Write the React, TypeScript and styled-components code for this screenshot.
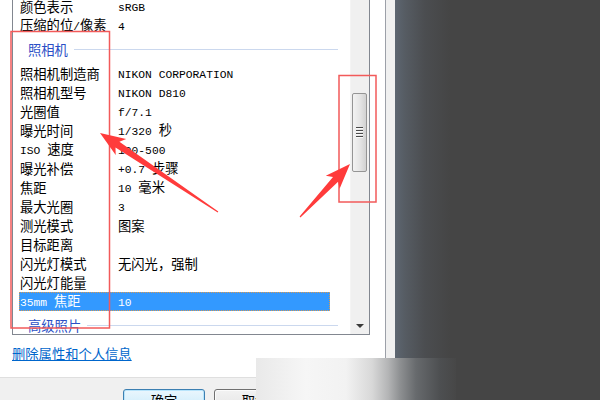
import styled, { createGlobalStyle } from 'styled-components';

const GlobalStyle = createGlobalStyle`
  html, body {
    margin: 0;
    padding: 0;
  }
  body {
    width: 600px;
    height: 400px;
    overflow: hidden;
    background: #454545;
    font-family: "Noto Sans CJK SC", sans-serif;
  }
`;

const Screen = styled.div`
  position: relative;
  display: flex;
  width: 600px;
  height: 400px;
  overflow: hidden;
`;

const Dialog = styled.div`
  width: 385px;
  display: flex;
  flex-direction: column;
  background: #fff;
  border-right: 1px solid #9ca0a8;
`;

const Frame = styled.div`
  width: 9px;
  background: #f0f0f0;
`;

const Desktop = styled.div`
  flex: 1;
  background: linear-gradient(to right, #5d6671 0px, #565c63 10px, #4b4d50 30px, #454545 55px);
`;

const Body = styled.div`
  flex-shrink: 0;
  height: 377px;
  padding-left: 12px;
  overflow: hidden;
`;

const ListBox = styled.div`
  margin-top: -13px;
  width: 358px;
  height: 348px;
  box-sizing: border-box;
  border: 1px solid #828790;
  display: flex;
`;

const Content = styled.div`
  flex: 1;
  padding-top: 9px;
  overflow: hidden;
`;

const Row = styled.div<{ $selected?: boolean }>`
  display: flex;
  align-items: center;
  height: 19px;
  margin-left: 6px;
  width: 311px;
  padding-left: 1px;
  box-sizing: border-box;
  font-size: 13.3px;
  line-height: 19px;
  color: ${p => (p.$selected ? '#fff' : '#000')};
  background: ${p => (p.$selected ? '#3399ff' : 'transparent')};
  outline: ${p => (p.$selected ? '1px dotted #d99a50' : 'none')};
  outline-offset: -1px;
  white-space: nowrap;
`;

const Label = styled.div`
  width: 98px;
  flex-shrink: 0;
`;

const Value = styled.div`
  flex: 1;
`;

const Cjk = styled.span`
  font-family: "Noto Sans CJK SC", sans-serif;
  font-size: 13.3px;
`;

const Latin = styled.span`
  font-family: "Liberation Mono", monospace;
  font-size: 11.3px;
  white-space: pre;
`;

const Heading = styled.div`
  display: flex;
  align-items: center;
  height: 29px;
  padding-left: 15px;
  padding-right: 12px;
  font-size: 13.3px;
  color: #2b4fc6;
`;

const HeadLine = styled.div`
  flex: 1;
  height: 1px;
  margin-left: 6px;
  background: #cbd8ee;
`;

const Scrollbar = styled.div`
  width: 18px;
  display: flex;
  flex-direction: column;
  background: #f0f0f0;
  border-left: 1px solid #f4f4f4;
`;

const Thumb = styled.div`
  margin-top: 105px;
  margin-left: 1px;
  width: 15px;
  height: 79px;
  box-sizing: border-box;
  border: 1px solid #959595;
  border-radius: 2px;
  background: linear-gradient(to right, #f3f3f3, #e6e6e6 50%, #d2d2d2);
  display: flex;
  flex-direction: column;
  align-items: center;
  justify-content: center;
  gap: 1px;
`;

const Grip = styled.div`
  width: 7px;
  height: 1px;
  background: #4a4a4a;
  border-bottom: 1px solid #fafafa;
`;

const TrackRest = styled.div`
  flex: 1;
`;

const ArrowButton = styled.div`
  height: 17px;
  display: flex;
  align-items: center;
  justify-content: center;
`;

const DownTriangle = styled.div`
  width: 0;
  height: 0;
  border-left: 4px solid transparent;
  border-right: 4px solid transparent;
  border-top: 4px solid #3a3a3a;
`;

const Link = styled.a`
  display: block;
  margin-top: 10px;
  font-size: 13.3px;
  line-height: 18px;
  color: #0066cc;
  text-decoration: underline;
`;

const Footer = styled.div`
  flex: 1;
  display: flex;
  gap: 9px;
  padding: 11px 0 0 123px;
  background: #f0f0f0;
  border-top: 1px solid #dfdfdf;
`;

const Button = styled.div<{ $default?: boolean }>`
  flex-shrink: 0;
  width: 82px;
  height: 23px;
  box-sizing: border-box;
  border: 1px solid ${p => (p.$default ? '#3c7fb1' : '#707070')};
  border-radius: 3px;
  box-shadow: inset 0 0 0 1px ${p => (p.$default ? '#b8e4fb' : '#fbfbfb')};
  background: ${p =>
    p.$default
      ? 'linear-gradient(#eaf6fd, #d9f0fc 50%, #bee6fd 51%, #a7d9f5)'
      : 'linear-gradient(#f2f2f2, #ebebeb 50%, #dddddd 51%, #cfcfcf)'};
  display: flex;
  justify-content: center;
  align-items: center;
  font-size: 13.3px;
  color: #000;
`;

const Watermark = styled.div`
  position: absolute;
  left: 256px;
  top: 358px;
  width: 200px;
  height: 42px;
  background: linear-gradient(
    to right,
    #e9e9e9 0%,
    #f6f6f6 25%,
    #f2f2f2 45%,
    #d8d8d8 58%,
    #b4b5b6 66%,
    #8e9092 72%,
    #676a6d 80%,
    #4d4f51 92%,
    #474747 100%
  );
`;

const Overlay = styled.svg`
  position: absolute;
  left: 0;
  top: 0;
  pointer-events: none;
`;

type Pair = [string, string];

const topRows: Pair[] = [
  ['颜色表示', 'sRGB'],
  ['压缩的位/像素', '4'],
];

const cameraRows: Pair[] = [
  ['照相机制造商', 'NIKON CORPORATION'],
  ['照相机型号', 'NIKON D810'],
  ['光圈值', 'f/7.1'],
  ['曝光时间', '1/320 秒'],
  ['ISO 速度', '100-500'],
  ['曝光补偿', '+0.7 步骤'],
  ['焦距', '10 毫米'],
  ['最大光圈', '3'],
  ['测光模式', '图案'],
  ['目标距离', ''],
  ['闪光灯模式', '无闪光，强制'],
  ['闪光灯能量', ''],
];

// split mixed text into latin and CJK runs so each gets its own font
const Mixed = ({ text }: { text: string }) => {
  const parts = text.split(/([\x00-\x7F]+)/).filter(s => s !== '');
  return (
    <>
      {parts.map((s, i) =>
        /^[\x00-\x7F]+$/.test(s) ? <Latin key={i}>{s}</Latin> : <Cjk key={i}>{s}</Cjk>
      )}
    </>
  );
};

const PropRow = ({ row, selected }: { row: Pair; selected?: boolean }) => (
  <Row $selected={selected}>
    <Label>
      <Mixed text={row[0]} />
    </Label>
    <Value>
      <Mixed text={row[1]} />
    </Value>
  </Row>
);

const arrowPoints = (
  tx: number, ty: number, sx: number, sy: number,
  headLen: number, headW: number, neck: number, tailW: number
) => {
  const dx = sx - tx;
  const dy = sy - ty;
  const len = Math.hypot(dx, dy);
  const ux = dx / len;
  const uy = dy / len;
  const px = -uy;
  const py = ux;
  const back = headLen * 1.2;
  const pts = [
    [tx, ty],
    [tx + ux * back + px * headW, ty + uy * back + py * headW],
    [tx + ux * headLen + px * neck, ty + uy * headLen + py * neck],
    [sx + px * tailW, sy + py * tailW],
    [sx - px * tailW, sy - py * tailW],
    [tx + ux * headLen - px * neck, ty + uy * headLen - py * neck],
    [tx + ux * back - px * headW, ty + uy * back - py * headW],
  ];
  return pts.map(p => `${p[0].toFixed(1)},${p[1].toFixed(1)}`).join(' ');
};

export default function App() {
  return (
    <>
      <GlobalStyle />
      <Screen>
        <Dialog>
          <Body>
            <ListBox>
              <Content>
                {topRows.map(r => (
                  <PropRow key={r[0]} row={r} />
                ))}
                <Heading>
                  照相机
                  <HeadLine />
                </Heading>
                {cameraRows.map(r => (
                  <PropRow key={r[0]} row={r} />
                ))}
                <PropRow row={['35mm 焦距', '10']} selected />
                <Heading>
                  高级照片
                  <HeadLine />
                </Heading>
              </Content>
              <Scrollbar>
                <Thumb>
                  <Grip />
                  <Grip />
                  <Grip />
                  <Grip />
                </Thumb>
                <TrackRest />
                <ArrowButton>
                  <DownTriangle />
                </ArrowButton>
              </Scrollbar>
            </ListBox>
            <Link>删除属性和个人信息</Link>
          </Body>
          <Footer>
            <Button $default>确定</Button>
            <Button>取消</Button>
          </Footer>
        </Dialog>
        <Frame />
        <Desktop />
        <Watermark />
        <Overlay width="600" height="400" viewBox="0 0 600 400">
          <rect x="11" y="31.5" width="98.5" height="296.5" fill="none" stroke="#f25a5a" strokeWidth="1.5" />
          <rect x="339" y="75.5" width="37" height="126.5" fill="none" stroke="#f25a5a" strokeWidth="1.5" />
          <polygon points={arrowPoints(100, 133, 218, 212, 21, 9.5, 3.5, 0.6)} fill="#ff3b3b" />
          <polygon points={arrowPoints(350, 164, 300, 217, 21, 9.5, 3.5, 0.6)} fill="#ff3b3b" />
        </Overlay>
      </Screen>
    </>
  );
}
